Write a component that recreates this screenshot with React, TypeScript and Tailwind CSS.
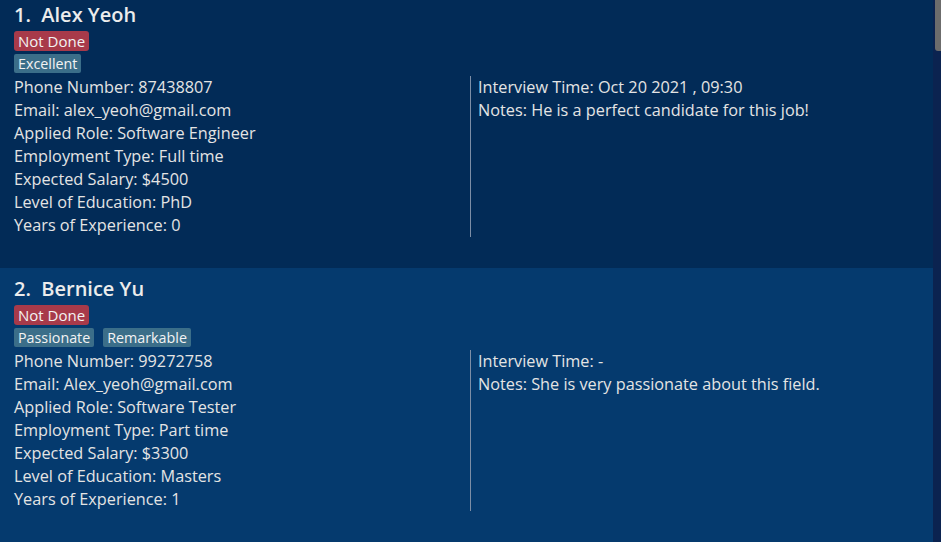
import React from "react";

type Applicant = {
  name: string;
  status: string;
  tags: string[];
  phone: string;
  email: string;
  role: string;
  employment: string;
  salary: string;
  education: string;
  experience: string;
  interview: string;
  notes: string;
};

const applicants: Applicant[] = [
  {
    name: "Alex Yeoh",
    status: "Not Done",
    tags: ["Excellent"],
    phone: "87438807",
    email: "alex_yeoh@gmail.com",
    role: "Software Engineer",
    employment: "Full time",
    salary: "$4500",
    education: "PhD",
    experience: "0",
    interview: "Oct 20 2021 , 09:30",
    notes: "He is a perfect candidate for this job!",
  },
  {
    name: "Bernice Yu",
    status: "Not Done",
    tags: ["Passionate", "Remarkable"],
    phone: "99272758",
    email: "Alex_yeoh@gmail.com",
    role: "Software Tester",
    employment: "Part time",
    salary: "$3300",
    education: "Masters",
    experience: "1",
    interview: "-",
    notes: "She is very passionate about this field.",
  },
];

function Card({ a, index }: { a: Applicant; index: number }) {
  const rowBg = index % 2 === 0 ? "bg-[#022b57]" : "bg-[#053a6e]";
  return (
    <div className={`${rowBg} h-[274px] pl-[14px] pt-[8px] shrink-0`}>
      {/* Header: index + name */}
      <div className="h-[26px] flex items-center text-[20px] font-semibold text-[#ececec] whitespace-pre leading-none">
        {index + 1}.  {a.name}
      </div>
      <div className="flex mt-[3px]">
        <span className="bg-[#a83a4a] text-[#f3f3f3] text-[15px] leading-[20px] px-[4px] rounded-[3px]">
          {a.status}
        </span>
      </div>
      <div className="flex gap-[9px] mt-[3px]">
        {a.tags.map((t) => (
          <span
            key={t}
            className="bg-[#3b6e89] text-[#f3f3f3] text-[14.3px] leading-[19px] px-[4px] rounded-[2px]"
          >
            {t}
          </span>
        ))}
      </div>

      {/* Details */}
      <div className="flex mt-[3px] text-[16.25px] leading-[23px] text-[#e4e4e4]">
        <div className="w-[456px] flex flex-col">
          <div>Phone Number: {a.phone}</div>
          <div>Email: {a.email}</div>
          <div>Applied Role: {a.role}</div>
          <div>Employment Type: {a.employment}</div>
          <div>Expected Salary: {a.salary}</div>
          <div>Level of Education: {a.education}</div>
          <div>Years of Experience: {a.experience}</div>
        </div>
        <div className="border-l border-[#7d8ea6] pl-[7px] flex-1 flex flex-col">
          <div>Interview Time: {a.interview}</div>
          <div>Notes: {a.notes}</div>
        </div>
      </div>
    </div>
  );
}

export default function App() {
  return (
    <div
      className="w-[941px] h-[542px] overflow-hidden flex bg-[#053a6e]"
      style={{ fontFamily: '"Open Sans", "Noto Sans", sans-serif' }}
    >
      <div className="flex-1 flex flex-col -mt-[6px]">
        {applicants.map((a, i) => (
          <Card key={a.name} a={a} index={i} />
        ))}
      </div>
      {/* Scrollbar */}
      <div className="w-[8px] bg-[#0b2350] flex justify-end">
        <div className="w-[6px] h-[51px] bg-[#6c6c6c] rounded-bl-[3px]" />
      </div>
    </div>
  );
}
